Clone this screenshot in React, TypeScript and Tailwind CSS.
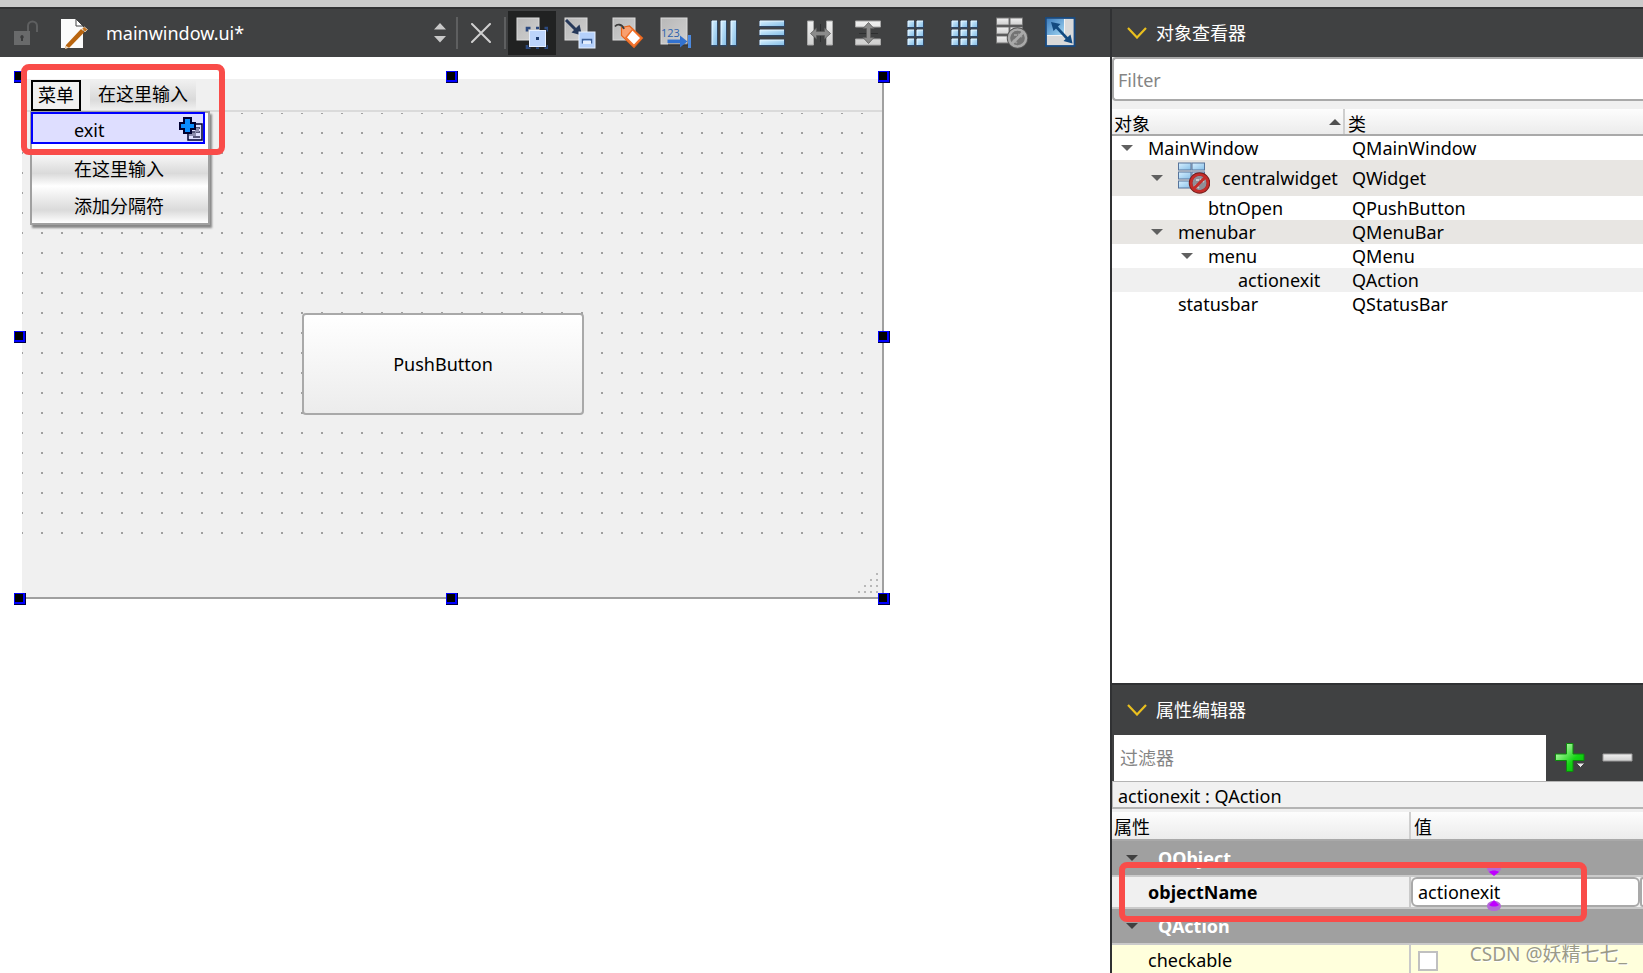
import type { ReactNode } from 'react'

interface TreeItem {
  name: string
  type: string
  depth: number
  open?: boolean
  icon?: boolean
  row: string
}

const treeItems: TreeItem[] = [
  { name: 'MainWindow', type: 'QMainWindow', depth: 0, open: true, row: 'h-[25px] bg-white' },
  { name: 'centralwidget', type: 'QWidget', depth: 1, open: true, icon: true, row: 'h-9 bg-[#e8e6e3]' },
  { name: 'btnOpen', type: 'QPushButton', depth: 2, row: 'h-6 bg-white' },
  { name: 'menubar', type: 'QMenuBar', depth: 1, open: true, row: 'h-6 bg-[#e8e6e3]' },
  { name: 'menu', type: 'QMenu', depth: 2, open: true, row: 'h-6 bg-white' },
  { name: 'actionexit', type: 'QAction', depth: 3, row: 'h-6 bg-[#f0f0f0]' },
  { name: 'statusbar', type: 'QStatusBar', depth: 1, row: 'h-6 bg-white' },
]

const indents = ['pl-[9px]', 'pl-[39px]', 'pl-[69px]', 'pl-[99px]']

const handles = [
  '-left-2 -top-2',
  'left-[424px] -top-2',
  'left-[856px] -top-2',
  '-left-2 top-[252px]',
  'left-[856px] top-[252px]',
  '-left-2 top-[514px]',
  'left-[424px] top-[514px]',
  'left-[856px] top-[514px]',
]

function Icon({ children }: { children: ReactNode }) {
  return (
    <svg className="size-8 shrink-0" viewBox="0 0 32 32" fill="none" aria-hidden="true">
      {children}
    </svg>
  )
}

function Bars({ boxes }: { boxes: number[][] }) {
  return (
    <Icon>
      {boxes.map(([x, y, w, h]) => (
        <g key={`${x}-${y}`}>
          <rect x={x - 1} y={y - 0.5} width={w + 2} height={h + 2} rx="1" fill="#2b4a73" opacity="0.7" />
          <rect x={x} y={y} width={w} height={h} fill="url(#ice)" />
          <path d={`M${x} ${y + h}V${y}H${x + w}`} stroke="#e4f5ff" strokeWidth="1" />
        </g>
      ))}
    </Icon>
  )
}

const gridColumns = (xs: number[]) => xs.flatMap((x) => [4, 13, 22].map((y) => [x, y, 6, 6]))

function GridIcon({ broken }: { broken?: boolean }) {
  const fill = broken ? 'url(#silver)' : 'url(#ice)'
  return (
    <Icon>
      {[1, 10, 19].map((y) => (
        <g key={y} stroke={broken ? '#777' : '#56739a'}>
          <rect x="0.5" y={y} width="12.5" height="7" fill={fill} />
          <rect x="14" y={y} width="12.5" height="7" fill={fill} />
        </g>
      ))}
      <circle cx="21.5" cy="21" r="9" fill={broken ? '#737373' : '#8f8f98'} stroke={broken ? '#555' : '#74201e'} strokeWidth="3.5" />
      <circle cx="21.5" cy="21" r="8.5" stroke={broken ? '#a9a9a9' : '#c52d2a'} strokeWidth="2.6" />
      <path d="M18 18h3M22 17l4 3M17 23l4 3" stroke={broken ? '#999' : '#c8c8cc'} strokeWidth="2" />
      <path d="M15.5 27l12-12" stroke={broken ? '#a9a9a9' : '#c52d2a'} strokeWidth="3" />
    </Icon>
  )
}

function Plate({ size = 22 }: { size?: number }) {
  return <rect x="1" y="1" width={size} height={size} fill="url(#plate)" stroke="#dcdcdc" />
}

function EditWidgetsIcon() {
  return (
    <Icon>
      <Plate />
      <path d="M11 14.5V11h3.500M28.500 11H32v3.500M32 28v3.500h-3.500M14.500 31.500H11V28M20 11h3M20 31.500h3" stroke="#2c4a80" strokeWidth="2.600" />
      <rect x="13.500" y="13.500" width="16" height="16" fill="#bcd4fb" stroke="#e5efff" />
      <rect x="20" y="20" width="3" height="3" fill="#1e3c70" />
    </Icon>
  )
}

function EditSignalsIcon() {
  return (
    <Icon>
      <Plate />
      <path d="M2 3l11 11" stroke="#27395a" strokeWidth="3" />
      <path d="M18 18.5L7.500 15.500l8-8z" fill="#27395a" />
      <rect x="15" y="15" width="16" height="16" fill="#b4d0fb" stroke="#e8f1ff" />
      <path d="M18.500 26.500v-4h9v4" stroke="#3c5f98" strokeWidth="1.500" />
      <rect x="19" y="24" width="8" height="3" fill="#e3edfc" />
    </Icon>
  )
}

function EditBuddiesIcon() {
  return (
    <Icon>
      <Plate />
      <path d="M9.500 10.500l8-1.500 13 12-8.500 9.500-12.500-12z" fill="#f9a070" stroke="#e8641a" strokeWidth="1.200" />
      <path d="M20.500 12.500l8.500 8.500-7 7.500-8-8z" fill="#fff" stroke="#f0702a" strokeWidth="1.500" />
      <path d="M3 9.500c2-2.500 7-3 9 2.500" stroke="#3d3d3d" strokeWidth="1.800" />
    </Icon>
  )
}

function TabOrderIcon() {
  return (
    <Icon>
      <Plate size={26} />
      <text x="1" y="20" fill="#2c62ae" fontSize="11" fontFamily="Open Sans, sans-serif">123</text>
      <path d="M8 26.500h20v2H8z" fill="#222" opacity="0.5" />
      <path d="M7.500 24.300h14" stroke="#3272d0" strokeWidth="3.500" />
      <path d="M20 18.500l7.500 6-7.500 6z" fill="#3272d0" />
      <path d="M29.500 18v13" stroke="#4c8ae0" strokeWidth="3" />
    </Icon>
  )
}

function HSplitIcon() {
  return (
    <Icon>
      <path d="M3.500 4h6v24h-6zM22.500 4h6v24h-6z" fill="url(#silver)" stroke="#a8a8a8" />
      <path d="M16.500 7v18" stroke="#2e2f30" />
      <path d="M6.500 16.500l6-5.500v3.500h8V11l6 5.500-6 5.500v-3.500h-8V22z" fill="#8b8b8b" stroke="#5c5c5c" strokeWidth="0.800" />
    </Icon>
  )
}

function VSplitIcon() {
  return (
    <Icon>
      <path d="M3.500 4h25v6h-25zM3.500 22h25v6h-25z" fill="url(#silver)" stroke="#a8a8a8" />
      <path d="M7 16.500h19" stroke="#2e2f30" />
      <path d="M16.500 5.500l5.500 6h-3.500v9H22l-5.500 6-5.500-6h3.500v-9H11z" fill="#8b8b8b" stroke="#5c5c5c" strokeWidth="0.800" />
    </Icon>
  )
}

function AdjustSizeIcon() {
  return (
    <Icon>
      <rect x="2" y="1" width="28.500" height="28" fill="#d9d9d9" stroke="#174a82" strokeWidth="1.800" />
      <rect x="3" y="2" width="17.500" height="16.500" fill="url(#sky)" />
      <path d="M20.500 2v16.500H3" stroke="#f4f4f4" />
      <path d="M11 8.500l14 15" stroke="#134a80" strokeWidth="2.600" />
      <path d="M7 5l9.500 2-7 7zM28.500 26.500l-9-2.500 7-6.500z" fill="#134a80" />
    </Icon>
  )
}

const tools = [
  { label: 'Edit Widgets', icon: <EditWidgetsIcon /> },
  { label: 'Edit Signals/Slots', icon: <EditSignalsIcon /> },
  { label: 'Edit Buddies', icon: <EditBuddiesIcon /> },
  { label: 'Edit Tab Order', icon: <TabOrderIcon /> },
  { label: 'Lay Out Horizontally', icon: <Bars boxes={[[4, 4, 5, 24], [13, 4, 5, 24], [23, 4, 5, 24]]} /> },
  { label: 'Lay Out Vertically', icon: <Bars boxes={[[4, 4, 24, 5], [4, 13, 24, 5], [4, 23, 24, 5]]} /> },
  { label: 'Lay Out Horizontally in Splitter', icon: <HSplitIcon /> },
  { label: 'Lay Out Vertically in Splitter', icon: <VSplitIcon /> },
  { label: 'Lay Out in a Form Layout', icon: <Bars boxes={gridColumns([8, 17])} /> },
  { label: 'Lay Out in a Grid', icon: <Bars boxes={gridColumns([4, 13, 23])} /> },
  { label: 'Break Layout', icon: <GridIcon broken /> },
  { label: 'Adjust Size', icon: <AdjustSizeIcon /> },
]

// gradients shared by every icon on the page
function IconDefs() {
  return (
    <svg className="absolute size-0" aria-hidden="true">
      <defs>
        <linearGradient id="ice" x1="0" y1="0" x2="1" y2="1">
          <stop offset="0" stopColor="#d8f0ff" />
          <stop offset="1" stopColor="#86bfe8" />
        </linearGradient>
        <linearGradient id="silver" x1="0" y1="0" x2="0" y2="1">
          <stop offset="0" stopColor="#f0f0f0" />
          <stop offset="1" stopColor="#cfcfcf" />
        </linearGradient>
        <linearGradient id="plate" x1="0" y1="0" x2="1" y2="1">
          <stop offset="0" stopColor="#b8b8b8" />
          <stop offset="1" stopColor="#d0d0d0" />
        </linearGradient>
        <linearGradient id="sky" x1="0" y1="0" x2="1" y2="1">
          <stop offset="0" stopColor="#3f7fbe" />
          <stop offset="1" stopColor="#a5d9f5" />
        </linearGradient>
        <linearGradient id="green" x1="0" y1="0" x2="1" y2="1">
          <stop offset="0.200" stopColor="#a8f59c" />
          <stop offset="0.600" stopColor="#16d516" />
          <stop offset="1" stopColor="#00b400" />
        </linearGradient>
      </defs>
    </svg>
  )
}

function Toolbar() {
  return (
    <div className="flex h-12 items-center bg-[#404142]">
      <button type="button" aria-label="Lock" className="ml-3.5">
        <svg className="h-7 w-[26px]" viewBox="0 0 26 28" fill="none">
          <path d="M0 12h16v14H0z" fill="#696a6b" />
          <path d="M14 12V7a4.500 4.500 0 0 1 9 0v6" stroke="#5e5f60" strokeWidth="2" />
          <path d="M8 16a2 2 0 0 1 1 3.500V22H7v-2.500A2 2 0 0 1 8 16z" fill="#3a3b3c" />
        </svg>
      </button>
      <svg className="ml-5 h-8 w-7" viewBox="0 0 28 32" fill="none" aria-hidden="true">
        <path d="M1 2h15l7 7v22H1z" fill="#fbfbfb" />
        <path d="M16 2v7h7z" fill="#fff" stroke="#404142" />
        <path d="M6 28l15-16 3.500 3L9.500 30.500 5 32z" fill="#b8640f" />
        <path d="M22 11.500l2.500-1.500 3 2.500-2.500 2.500z" fill="#c4701c" stroke="#e7d2bb" strokeWidth="0.800" />
        <path d="M5 32l1-3 3 1.500z" fill="#eadbc8" />
      </svg>
      <select
        aria-label="Open document"
        className="ml-[18px] h-8 min-w-0 flex-1 appearance-none bg-transparent text-white outline-none"
      >
        <option>mainwindow.ui*</option>
      </select>
      <svg className="h-5 w-3" viewBox="0 0 12 20" fill="#c8c8c8" aria-hidden="true">
        <path d="M6 0l6 6.500H0zM0 13h12l-6 6.500z" />
      </svg>
      <span className="ml-2.5 h-8 w-0.5 bg-[#5e5f60]" />
      <button type="button" aria-label="Close document" className="ml-[13px]">
        <svg className="size-5" viewBox="0 0 20 20" stroke="#d0d0d0" strokeWidth="2" strokeLinecap="round">
          <path d="M1 1l18 18M19 1L1 19" />
        </svg>
      </button>
      <span className="ml-[13px] mr-0.5 h-8 w-0.5 bg-[#5e5f60]" />
      {tools.map((tool, i) => (
        <button
          key={tool.label}
          type="button"
          aria-label={tool.label}
          className={`flex h-11 w-12 items-center justify-center ${i === 0 ? 'bg-[#212222]' : ''}`}
        >
          {tool.icon}
        </button>
      ))}
      <span className="w-[26px]" />
    </div>
  )
}

function FormCanvas() {
  return (
    <main className="flex-1 bg-white pl-[22px] pt-[22px]">
      <div className="relative flex h-[520px] w-[862px] flex-col border-b-2 border-r-2 border-[#a0a0a0] bg-[#f0f0f0]">
        <div className="flex h-[33px] border-b-2 border-[#dadada] pl-[9px] pt-px">
          <button type="button" className="z-10 h-[31px] w-[50px] border-2 border-black pb-0.5 leading-6">
            菜单
          </button>
          <button
            type="button"
            className="ml-[9px] h-[30px] w-[106px] bg-linear-to-b from-[#f0f0f0] via-[#dadada] via-65% to-[#f0f0f0] pb-0.5 leading-6"
          >
            在这里输入
          </button>
        </div>
        <div className="mr-[10px] mt-px h-[428px] bg-[conic-gradient(from_270deg_at_2px_2px,#a0a0a0_25%,transparent_0)] bg-[position:-1px_-1px] bg-[size:20px_20px]" />

        <button
          type="button"
          className="absolute left-[280px] top-[234px] h-[102px] w-[282px] rounded border-2 border-[#a9a9a9] bg-linear-to-b from-white to-[#ececec]"
        >
          PushButton
        </button>

        <div
          role="menu"
          className="absolute left-2 top-8 w-[180px] border-2 border-[#a0a0a0] bg-white shadow-[2px_3px_2px_#888]"
        >
          <button
            type="button"
            role="menuitem"
            className="-ml-px -mt-px flex h-8 w-[174px] items-center justify-between border-2 border-[#0000ff] bg-[#dedeff] pl-[41px] pt-1"
          >
            exit
            <svg className="h-[26px] w-6" viewBox="0 0 24 26" fill="none" aria-hidden="true">
              <path d="M9 7h14v16H9z" fill="#dedeff" stroke="#000030" strokeWidth="1.500" />
              <path d="M16 11h5M12 15h9M14 20h7" stroke="#55557a" strokeWidth="2" />
              <path d="M10 16h6v-5h4v4h-3v4h-7z" fill="#8c8cae" />
              <path d="M5 1h7v5h4v6h-4v4H5v-4H1V6h4z" fill="#0a8cff" stroke="#000030" strokeWidth="2" />
            </svg>
          </button>
          <button
            type="button"
            role="menuitem"
            className="mt-1.5 block h-9 w-full bg-linear-to-b from-white via-[#dadada] via-65% to-white pl-[42px] pt-0.5 text-left"
          >
            在这里输入
          </button>
          <button
            type="button"
            role="menuitem"
            className="block h-[37px] w-full bg-linear-to-b from-white via-[#dadada] via-65% to-white pl-[42px] pt-0.5 text-left"
          >
            添加分隔符
          </button>
        </div>

        {handles.map((place) => (
          <span key={place} className={`absolute size-3 border-b border-r border-[#000040] bg-[#0000ff] p-px ${place}`}>
            <span className="block size-2 bg-black" />
          </span>
        ))}
        <svg className="absolute bottom-0.5 right-0.5 size-6" viewBox="0 0 24 24" fill="#b8b8b8" aria-hidden="true">
          {[0, 1, 2, 3].map((row) =>
            Array.from({ length: row + 1 }, (_, i) => (
              <rect key={`${row}-${i}`} x={20 - i * 6} y={2 + row * 6} width="2" height="2" />
            )),
          )}
        </svg>
        <div className="pointer-events-none absolute -left-px -top-[15px] z-20 h-[91px] w-[204px] rounded-lg border-6 border-[#f94c49]" />
      </div>
    </main>
  )
}

function PanelTitle({ children }: { children: ReactNode }) {
  return (
    <h2 className="flex flex-1 items-center gap-[9px] pl-[15px] text-white">
      <svg className="h-3 w-5" viewBox="0 0 20 12" fill="none" stroke="#e9bf1e" strokeWidth="2.200" aria-hidden="true">
        <path d="M1 1l9 9.500L19 1" />
      </svg>
      {children}
    </h2>
  )
}

function Triangle({ className }: { className: string }) {
  return (
    <svg className={`h-1.5 w-3 shrink-0 ${className}`} viewBox="0 0 12 6" fill="currentColor" aria-hidden="true">
      <path d="M0 0h12L6 6z" />
    </svg>
  )
}

function ObjectInspector() {
  return (
    <section className="flex flex-1 flex-col bg-white">
      <header className="flex h-12 bg-[#404142]">
        <PanelTitle>对象查看器</PanelTitle>
      </header>
      <div className="h-[52px] bg-[#f0f0f0]">
        <input
          type="text"
          aria-label="Filter objects"
          placeholder="Filter"
          className="h-11 w-full rounded-l border-2 border-r-0 border-[#a9a9a9] bg-white px-1 pt-px outline-none placeholder:text-[#858585]"
        />
      </div>
      <table className="w-full table-fixed border-collapse text-left">
        <thead>
          <tr className="h-[26px] bg-linear-to-b from-[#fdfdfd] to-[#ebebeb]">
            <th className="w-[232px] border-b-2 border-r-2 border-b-[#a9a9a9] border-r-[#cfcfcf] p-0 pl-0.5 font-normal">
              <span className="flex h-6 items-center justify-between pt-1">
                对象
                <Triangle className="mb-1 mr-0.5 rotate-180 text-[#505050]" />
              </span>
            </th>
            <th className="border-b-2 border-[#a9a9a9] p-0 pl-[3px] font-normal">
              <span className="flex h-6 items-center pt-1">类</span>
            </th>
          </tr>
        </thead>
        <tbody>
          {treeItems.map((item) => (
            <tr key={item.name} className={item.row}>
              <td className="p-0">
                <span className={`flex items-center ${indents[item.depth]}`}>
                  {item.open ? <Triangle className="text-[#606060]" /> : <span className="w-3" />}
                  <span className="ml-[15px] flex items-center gap-3">
                    {item.icon && <GridIcon />}
                    {item.name}
                  </span>
                </span>
              </td>
              <td className="p-0 pl-2">{item.type}</td>
            </tr>
          ))}
        </tbody>
      </table>
    </section>
  )
}

function GroupRow({ name }: { name: string }) {
  return (
    <tr className="h-9 bg-[#a0a0a0] text-white">
      <th colSpan={2} className="border-b-2 border-[#cacaca] p-0 pl-3.5 font-bold">
        <span className="flex items-center gap-5">
          <Triangle className="text-[#404040]" />
          {name}
        </span>
      </th>
    </tr>
  )
}

function PropertyEditor() {
  return (
    <section className="relative shrink-0 border-t-2 border-[#303133] bg-[#f0f0f0]">
      <header className="flex h-[50px] bg-[#404142]">
        <PanelTitle>属性编辑器</PanelTitle>
      </header>
      <div className="flex h-[46px] items-center bg-[#404142] pl-0.5">
        <input
          type="text"
          aria-label="Filter properties"
          placeholder="过滤器"
          className="h-full min-w-0 flex-1 bg-white px-1.5 outline-none placeholder:text-[#858585]"
        />
        <button type="button" aria-label="Add dynamic property" className="ml-2">
          <svg className="size-8" viewBox="0 0 32 32" fill="none">
            <path d="M12.500 1.500h6.500v10.500h11v6.500H19V29.500h-6.500V18.500h-11V12h11z" fill="url(#green)" stroke="#0c8a0c" />
            <path d="M22 21h9l-4.500 4.500z" fill="#e6e6e6" stroke="#404142" />
          </svg>
        </button>
        <button type="button" aria-label="Remove dynamic property" className="ml-4 mr-2.5">
          <svg className="h-3 w-[31px]" viewBox="0 0 31 12">
            <path d="M1 2h29v7H1z" fill="url(#silver)" stroke="#9a9a9a" />
          </svg>
        </button>
      </div>
      <p className="h-7 border-b-2 border-l border-t border-[#b4b4b4] bg-[#f1f1f1] pl-[5px] leading-7">
        actionexit : QAction
      </p>
      <table className="mt-[3px] w-full table-fixed border-collapse text-left">
        <thead>
          <tr className="h-7 bg-linear-to-b from-[#fdfdfd] to-[#ebebeb]">
            <th className="w-[298px] border-b-2 border-r-2 border-b-[#a9a9a9] border-r-[#cfcfcf] p-0 pl-0.5 font-normal">
              <span className="flex h-6 items-center pt-0.5">属性</span>
            </th>
            <th className="border-b-2 border-[#a9a9a9] p-0 pl-[3px] font-normal">
              <span className="flex h-6 items-center pt-0.5">值</span>
            </th>
          </tr>
        </thead>
        <tbody>
          <GroupRow name="QObject" />
          <tr className="h-8 bg-[#f0f0f0]">
            <th className="border-b-2 border-r-2 border-[#cacaca] p-0 pl-9 font-bold">
              <label htmlFor="object-name">objectName</label>
            </th>
            <td className="border-b-2 border-[#cacaca] p-0">
              <span className="flex">
                <input
                  id="object-name"
                  type="text"
                  defaultValue="actionexit"
                  className="h-[30px] min-w-0 flex-1 rounded-md border-2 border-[#a9a9a9] bg-white px-[5px] outline-none"
                />
                <button
                  type="button"
                  aria-label="Reset objectName"
                  className="h-[30px] w-[3px] rounded-l border-2 border-r-0 border-[#a9a9a9] bg-white"
                />
              </span>
            </td>
          </tr>
          <GroupRow name="QAction" />
          <tr className="h-[29px] bg-[#ffffdc]">
            <th className="border-r-2 border-[#cacaca] p-0 pl-9 font-normal">
              <label htmlFor="checkable" className="block pt-0.5 leading-6">checkable</label>
            </th>
            <td className="p-0 pl-[7px]">
              <input
                id="checkable"
                type="checkbox"
                className="mt-1 block size-5 appearance-none border-2 border-[#c0c0c0] bg-white"
              />
            </td>
          </tr>
        </tbody>
      </table>

      <div className="pointer-events-none absolute bottom-[51px] left-[7px] h-[60px] w-[468px] rounded-lg border-6 border-[#f94c49]" />
      <svg className="pointer-events-none absolute bottom-[62px] left-[374px] h-[43px] w-4" viewBox="0 0 16 43" aria-hidden="true">
        <path d="M1 0h14c0 3-3 6-7 6S1 3 1 0zM1 38c0-3 3-5 7-5s7 2 7 5-3 5-7 5-7-2-7-5z" fill="#b46ad8" />
        <path d="M3 4c3-2 7-2 10 0L8 8zM3 37c3 2 7 2 10 0l-5-5z" fill="#bf00ff" />
      </svg>
      <span className="pointer-events-none absolute bottom-[7px] right-4 text-[19px] leading-6 text-[#9a9a88] [text-shadow:1px_1px_0_#fff]">
        CSDN @妖精七七_
      </span>
    </section>
  )
}

export default function App() {
  return (
    <div className="flex h-screen flex-col overflow-hidden font-['Noto_Sans','Noto_Sans_CJK_SC',sans-serif] text-lg leading-6 text-black">
      <IconDefs />
      <div className="h-[9px] shrink-0 border-b-2 border-[#303133] bg-[#cacaca]" />
      <div className="flex min-h-0 flex-1">
        <div className="flex min-w-0 flex-1 flex-col">
          <Toolbar />
          <FormCanvas />
        </div>
        <aside className="flex w-[533px] shrink-0 flex-col border-l-2 border-[#303133]">
          <ObjectInspector />
          <PropertyEditor />
        </aside>
      </div>
    </div>
  )
}
